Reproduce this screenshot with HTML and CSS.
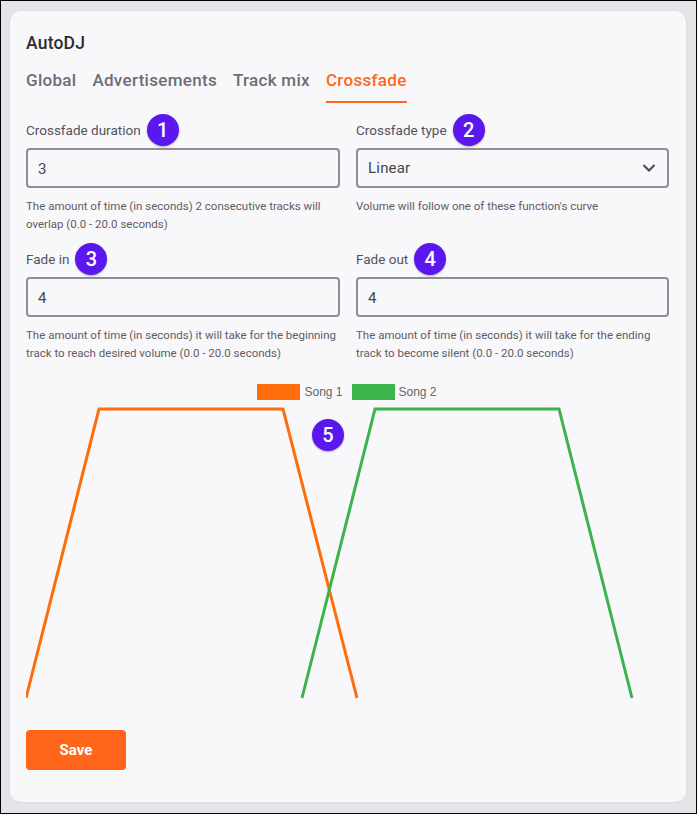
FILE: index.html
```html
<!DOCTYPE html>
<html lang="en">
  <head>
    <meta charset="UTF-8" />
    <meta name="viewport" content="width=device-width, initial-scale=1.0" />
    <title>AutoDJ</title>
    <link rel="stylesheet" href="styles.css">
  </head>
  <body>
    <div class="card">
      <h1 class="title">AutoDJ</h1>
      <div class="tabs">
        <div class="tab">Global</div>
        <div class="tab">Advertisements</div>
        <div class="tab">Track mix</div>
        <div class="tab active">Crossfade</div>
      </div>

      <div class="fields">
        <div class="field">
          <div class="label">Crossfade duration <span class="badge">1</span></div>
          <div class="input">3</div>
          <div class="help">The amount of time (in seconds) 2 consecutive tracks will overlap (0.0 - 20.0 seconds)</div>
        </div>
        <div class="field">
          <div class="label">Crossfade type <span class="badge">2</span></div>
          <div class="input select">
            <span class="value">Linear</span>
            <svg class="chevron" width="14" height="8" viewBox="0 0 14 8"><path d="M1.5 1 L7 6.5 L12.5 1" fill="none" stroke="#4a4850" stroke-width="2"/></svg>
          </div>
          <div class="help">Volume will follow one of these function's curve</div>
        </div>
        <div class="field">
          <div class="label">Fade in <span class="badge">3</span></div>
          <div class="input">4</div>
          <div class="help">The amount of time (in seconds) it will take for the beginning track to reach desired volume (0.0 - 20.0 seconds)</div>
        </div>
        <div class="field">
          <div class="label">Fade out <span class="badge">4</span></div>
          <div class="input">4</div>
          <div class="help">The amount of time (in seconds) it will take for the ending track to become silent (0.0 - 20.0 seconds)</div>
        </div>
      </div>

      <div class="chart">
        <div class="legend">
          <div class="legend-item"><span class="swatch orange"></span>Song 1</div>
          <div class="legend-item"><span class="swatch green"></span>Song 2</div>
        </div>
        <svg class="plot" width="643" height="293" viewBox="0 0 643 293">
          <polyline points="0,292 73,3 257,3 331,292" fill="none" stroke="#ff6c0a" stroke-width="3"/>
          <polyline points="276,292 349,3 533,3 606,292" fill="none" stroke="#3cb44b" stroke-width="3"/>
        </svg>
        <span class="badge badge-chart">5</span>
      </div>

      <button class="save">Save</button>
    </div>
  </body>
</html>
```

FILE: styles.css
```css
* {
  margin: 0;
  padding: 0;
  box-sizing: border-box;
}

body {
  height: 814px;
  background: #e5e4e8;
  border: 1px solid #000;
  padding: 10px 10px 11px 9px;
  font-family: "Roboto", "Liberation Sans", sans-serif;
  overflow: hidden;
}

.card {
  height: 791px;
  background: #f8f8fa;
  border-radius: 10px;
  box-shadow: 0 0 2px rgba(0, 0, 0, 0.12);
  padding: 22px 16px 0;
}

.title {
  font-size: 17.5px;
  line-height: 20px;
  letter-spacing: 0.2px;
  font-weight: 500;
  color: #2d2b33;
}

.tabs {
  display: flex;
  gap: 16px;
  margin-top: 13px;
  height: 37px;
}

.tab {
  padding-top: 2px;
  font-size: 17px;
  line-height: 24px;
  letter-spacing: 0.3px;
  font-weight: 500;
  color: #6f6c76;
}

.tab.active {
  color: #ff6620;
  border-bottom: 2px solid #ff6620;
}

.fields {
  display: grid;
  grid-template-columns: 314px 313px;
  column-gap: 16px;
  margin-top: 11px;
}

.field {
  height: 129px;
}

.label {
  display: flex;
  align-items: center;
  gap: 6px;
  height: 32px;
  font-size: 13.5px;
  color: #55525c;
}

.badge {
  display: flex;
  align-items: center;
  justify-content: center;
  width: 32px;
  height: 32px;
  border-radius: 50%;
  background: #5a17ee;
  color: #fff;
  font-size: 20px;
  font-weight: 500;
  box-shadow: 0 1px 2px rgba(0, 0, 0, 0.3);
}

.input {
  height: 40px;
  margin-top: 2px;
  padding: 0 10px;
  border: 2px solid #8e8c96;
  border-radius: 4px;
  font-size: 15px;
  line-height: 39px;
  letter-spacing: 0.2px;
  color: #47444e;
}

.select {
  display: flex;
  justify-content: space-between;
  align-items: center;
}

.chevron {
  margin-right: 1px;
}

.help {
  margin-top: 9px;
  font-size: 11.5px;
  line-height: 18px;
  color: #5f5c66;
}

.chart {
  position: relative;
  margin-top: 10px;
}

.legend {
  display: flex;
  justify-content: center;
  gap: 9px;
  height: 24px;
  padding-top: 2px;
  padding-right: 2px;
}

.legend-item {
  display: flex;
  gap: 4px;
  height: 16px;
  font-family: "Liberation Sans", sans-serif;
  font-size: 12px;
  line-height: 16px;
  color: #666;
}

.swatch {
  width: 43px;
  height: 16px;
}

.swatch.orange {
  background: #ff6c0a;
}

.swatch.green {
  background: #3cb44b;
}

.plot {
  display: block;
}

.badge-chart {
  position: absolute;
  left: 286px;
  top: 37px;
}

.save {
  display: block;
  width: 100px;
  height: 40px;
  margin-top: 31px;
  border: 0;
  border-radius: 4px;
  background: #ff661c;
  color: #fff;
  font-family: inherit;
  font-size: 15px;
  font-weight: 700;
}
```
